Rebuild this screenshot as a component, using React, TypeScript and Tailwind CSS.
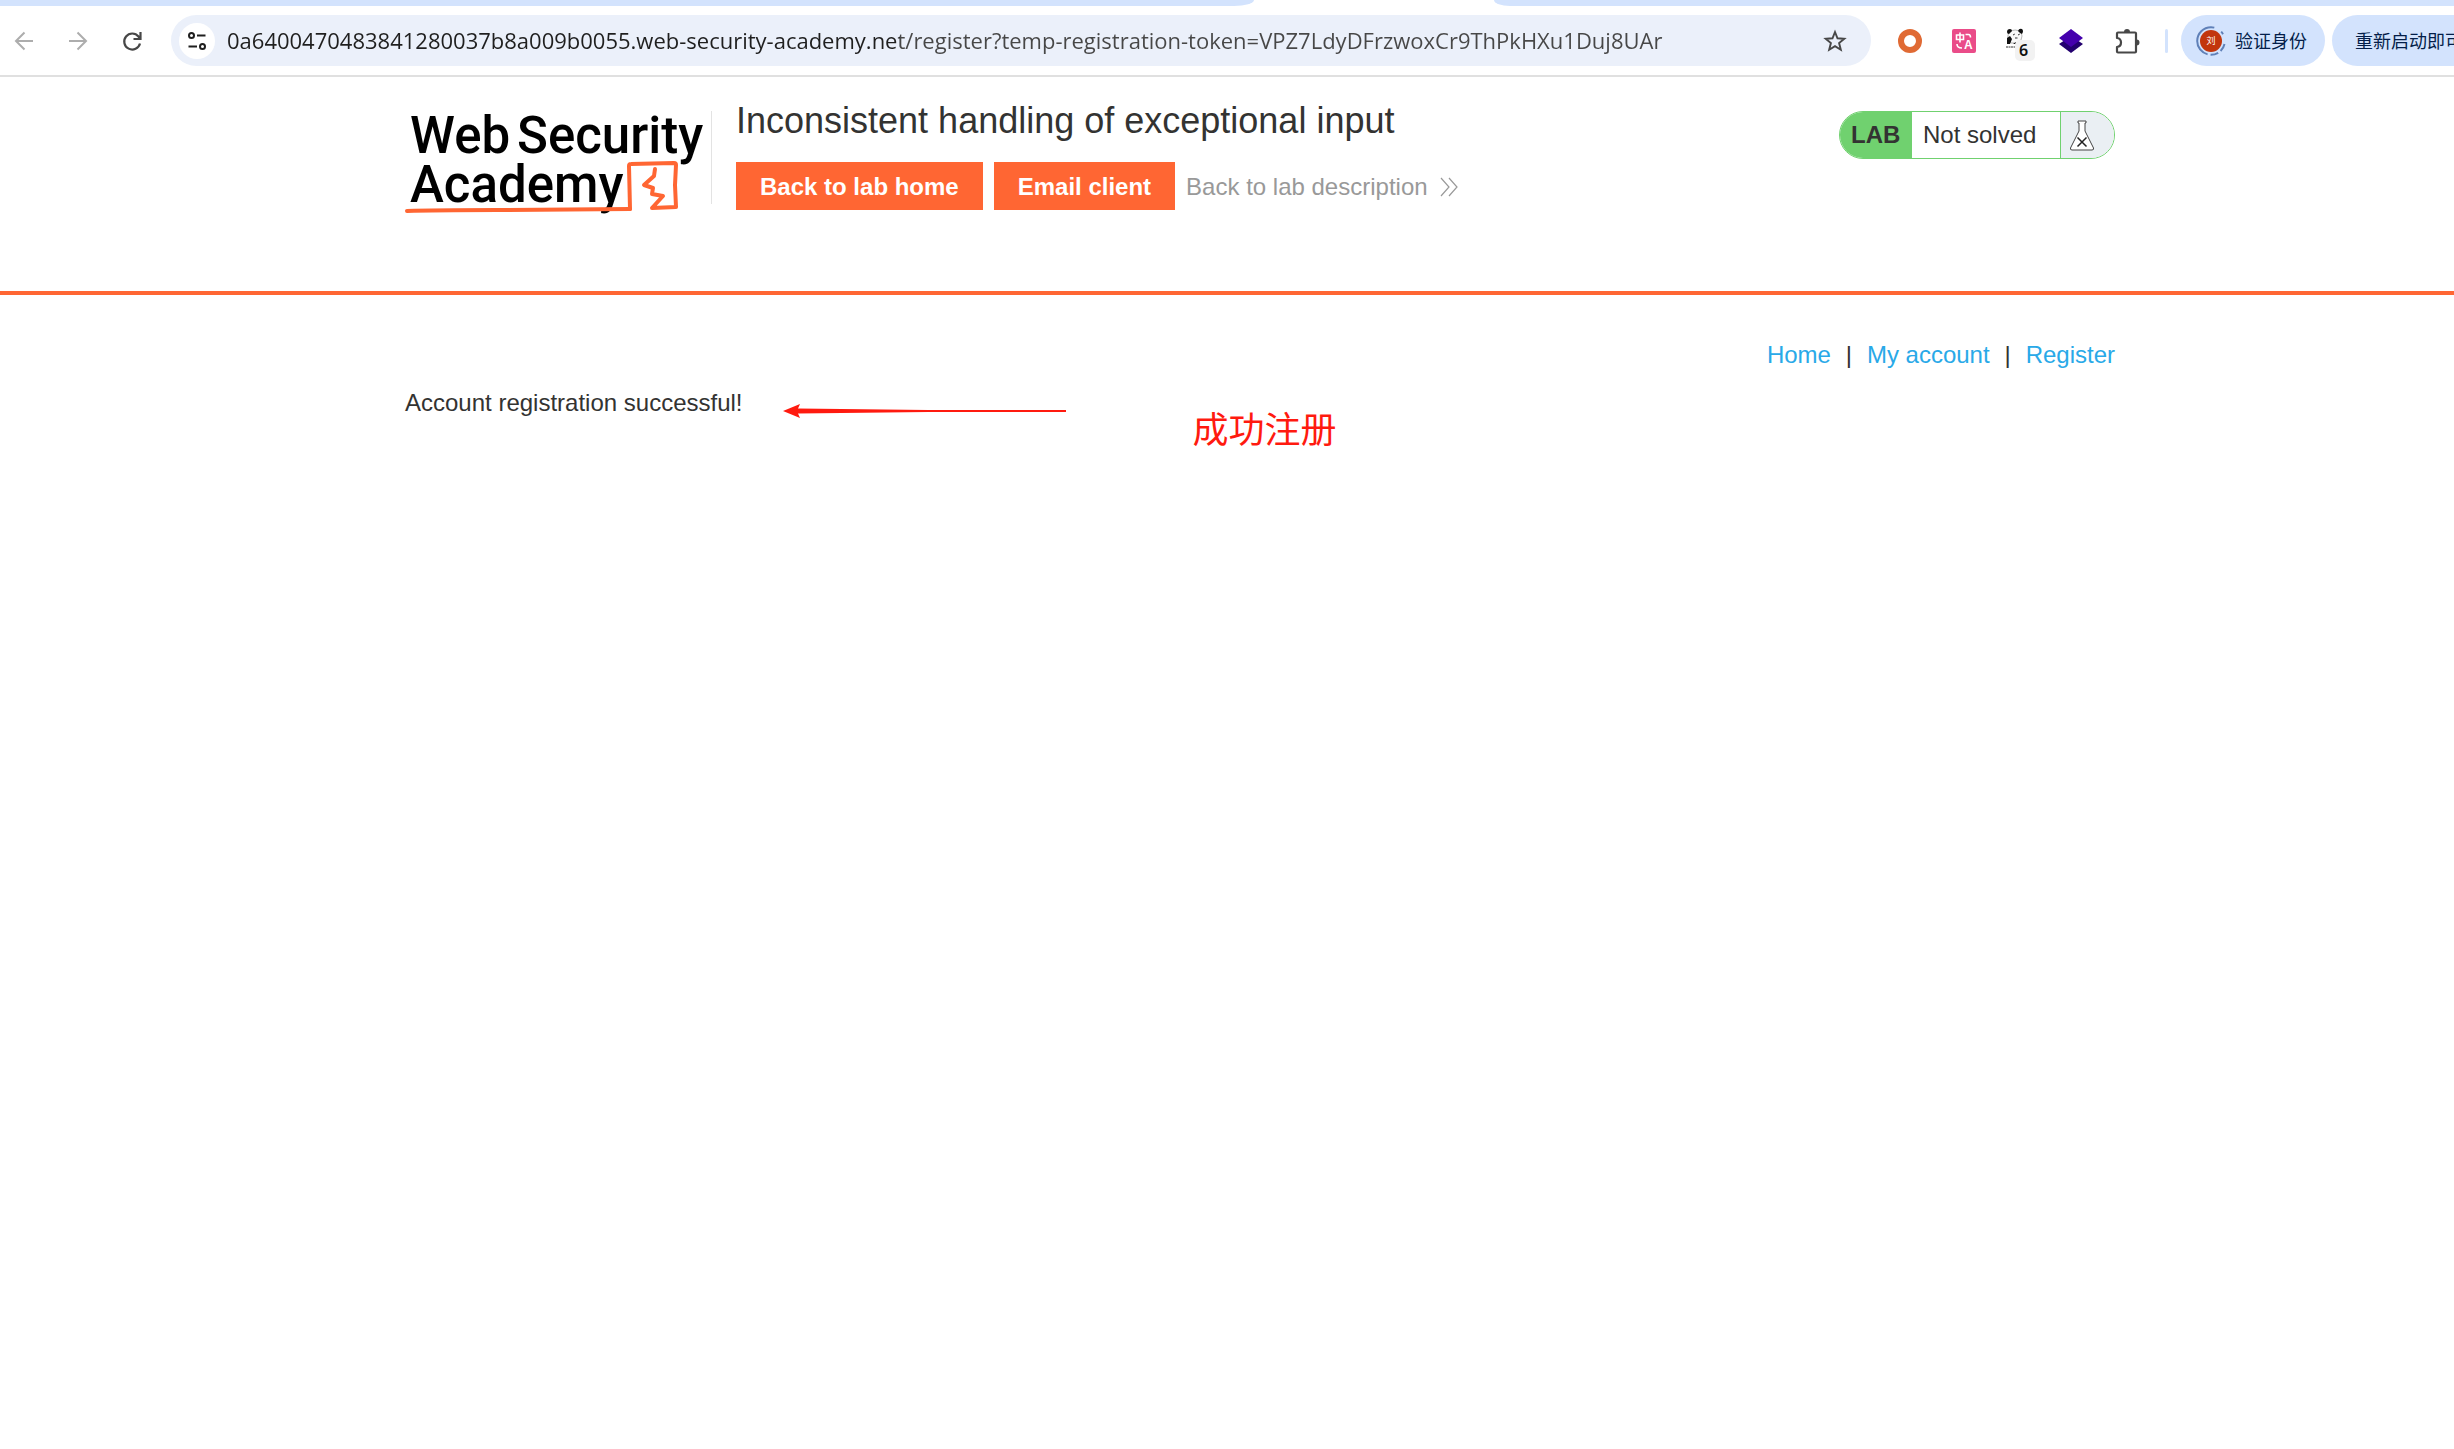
import React, { useState } from 'react';

const PAGE_URL =
  '0a6400470483841280037b8a009b0055.web-security-academy.net/register?temp-registration-token=VPZ7LdyDFrzwoxCr9ThPkHXu1Duj8UAr';

const navLinks = ['Home', 'My account', 'Register'];

function TabStrip() {
  return (
    <div className="grid grid-cols-[51.1%_240px_1fr] h-[6px] bg-white">
      <div className="bg-[#d3e3fd] rounded-br-[20px_6px]" />
      <div />
      <div className="bg-[#d3e3fd] rounded-bl-[16px_6px]" />
    </div>
  );
}

function TranslateIcon() {
  return (
    <svg className="w-6 h-6" viewBox="0 0 24 24" aria-hidden="true">
      <rect width="24" height="24" rx="2" fill="#ea4c89" />
      <g fill="none" stroke="#fff" strokeWidth="1.6">
        <path d="M4.5 6h7v4.500h-7zM8 3.500v10M13.500 5.500h3q2 0 2 3M5 15q0 4 5 4" />
      </g>
      <text x="12" y="20" fill="#fff" fontSize="12" fontWeight="700" fontFamily="Liberation Sans, sans-serif">A</text>
    </svg>
  );
}

function PandaIcon() {
  return (
    <svg className="w-[30px] h-[34px]" viewBox="0 0 30 34" aria-hidden="true">
      <path d="M3.500 4Q9 0 15 4L16 8 15 12 11 15H5L2 11V7z" fill="#fafafa" stroke="#999" strokeWidth=".7" />
      <path d="M1 4q0-3 3-3 2 0 2 2L3 6Q1 6 1 4zM12 3q1-3 4-2 2 2 0 5l-2-1zM1 10l3-2 2 3-2 5H1zM7 16l3-2 2 2z" fill="#111" />
      <path d="M7 7l2-1M12 7l2-1M9 10h3M0 19h9" stroke="#333" strokeWidth="1" strokeDasharray="2 .5" />
      <rect x="9" y="12" width="20" height="21" rx="5" fill="#f2f2f2" />
      <text x="13" y="28" fontSize="16" fontWeight="600" fill="#111" fontFamily="Noto Sans, sans-serif">6</text>
    </svg>
  );
}

function Toolbar() {
  const [url, setUrl] = useState(PAGE_URL);

  return (
    <header className="flex items-center h-[71px] border-b-2 border-[#e0e0e0] bg-white font-['Noto_Sans','Noto_Sans_CJK_SC',sans-serif]">
      <div className="flex items-center gap-[30px] pl-3 pr-[27px]">
        <button aria-label="Back" className="text-[#adadad]">
          <svg className="w-6 h-6" viewBox="0 0 24 24" fill="none" stroke="currentColor" strokeWidth="2">
            <path d="M21 12H4M12.500 3.500L4 12l8.500 8.500" />
          </svg>
        </button>
        <button aria-label="Forward" className="text-[#adadad]">
          <svg className="w-6 h-6" viewBox="0 0 24 24" fill="none" stroke="currentColor" strokeWidth="2">
            <path d="M3 12h17M11.500 3.500L20 12l-8.500 8.500" />
          </svg>
        </button>
        <button aria-label="Reload" className="text-[#474747]">
          <svg className="w-6 h-6" viewBox="0 0 24 24" fill="none" stroke="currentColor" strokeWidth="2.200">
            <path d="M20 14.500A8 8 0 1 1 18.500 7.500L20 9.500M20.500 3v7h-7" />
          </svg>
        </button>
      </div>

      <div className="flex flex-1 items-center h-[51px] pl-2 pr-6 rounded-full bg-[#ebf0fa]">
        <button aria-label="View site information" className="flex items-center justify-center w-9 h-9 rounded-full bg-white">
          <svg className="w-5 h-5" viewBox="0 0 20 20" fill="none" stroke="#1f1f1f" strokeWidth="2">
            <circle cx="4.500" cy="4.500" r="2.500" />
            <path d="M10 4.500h8.500M1.500 15.500H10" />
            <circle cx="15.500" cy="15.500" r="2.500" />
          </svg>
        </button>
        {/* host is darker than the path */}
        <input
          type="text"
          aria-label="Address"
          value={url}
          onChange={(e) => setUrl(e.target.value)}
          className="flex-1 min-w-0 ml-3 h-10 pb-[2px] text-[22px] font-['Open_Sans',sans-serif] outline-none text-transparent bg-clip-text bg-[linear-gradient(90deg,#1f1f1f_673px,#474747_673px)]"
        />
        <button aria-label="Bookmark this tab">
          <svg className="w-6 h-6" viewBox="0 0 24 24" fill="none" stroke="#474747" strokeWidth="1.900">
            <path d="M12 3l2.500 6.300 6.800.500-5.200 4.300 1.700 6.600L12 17.100l-5.800 3.600 1.700-6.600L2.700 9.800l6.800-.500z" />
          </svg>
        </button>
      </div>

      <div className="flex items-center gap-[30px] pl-[27px]">
        <button aria-label="Proxy extension">
          <svg className="w-6 h-6" viewBox="0 0 24 24">
            <circle cx="12" cy="12" r="9" fill="none" stroke="#e06a34" strokeWidth="6" />
          </svg>
        </button>
        <button aria-label="Translate"><TranslateIcon /></button>
        <button aria-label="Panda extension" className="-mr-[7px] pt-2"><PandaIcon /></button>
        <button aria-label="Layers extension">
          <svg className="w-6 h-6" viewBox="0 0 24 24">
            <path d="M12 7l12 8-12 9L0 15z" fill="#23006f" />
            <path d="M12 0l12 9-12 9L0 9z" fill="#4400ad" />
          </svg>
        </button>
        <button aria-label="Extensions">
          <svg className="w-7 h-7" viewBox="0 0 28 28">
            <path d="M4 6.500q0-1 1-1h17q1 0 1 1v18q0 1-1 1H5q-1 0-1-1V20q4-.500 4-4.500T4 11z" fill="none" stroke="#474747" strokeWidth="2.200" strokeLinejoin="round" />
            <path d="M11 5a3 3 0 0 1 6 0zM23.500 12.500a3 3 0 0 1 0 6z" fill="#474747" />
          </svg>
        </button>
      </div>

      <div className="w-[3px] h-6 ml-6 mr-[13px] rounded bg-[#d3e3fd]" />

      <button className="flex items-center h-[51px] w-36 pl-[15px] rounded-full bg-[#d3e3fd] text-lg text-[#041e49]">
        <svg className="w-[30px] h-[30px] mr-[9px]" viewBox="0 0 30 30" aria-hidden="true">
          <circle cx="15" cy="15" r="13.800" fill="none" stroke="#5f80b8" strokeWidth="2" strokeDasharray="8 3 8 3 8 3 8 3 43" strokeDashoffset="19" />
          <circle cx="15" cy="15" r="11" fill="#c2360d" />
          <text x="15" y="18" textAnchor="middle" fontSize="9" fill="#fff" fontFamily="Noto Sans CJK SC, sans-serif">刘</text>
        </svg>
        验证身份
      </button>
      <button className="h-[51px] w-[122px] ml-[7px] pl-[23px] rounded-l-full bg-[#d3e3fd] text-lg text-[#041e49] text-left whitespace-nowrap overflow-hidden">
        重新启动即可
      </button>
    </header>
  );
}

function AcademyLogo() {
  return (
    <svg className="block w-[306px] h-[112px]" viewBox="0 0 306 112" role="img" aria-label="Web Security Academy">
      <g fill="#000" fontFamily="Roboto, sans-serif" fontWeight="500" fontSize="51">
        <text x="5" y="47">Web</text>
        <text x="112" y="47">Security</text>
        <text x="5" y="96">Academy</text>
      </g>
      <g fill="none" stroke="#ff6633" strokeLinejoin="round" strokeLinecap="round">
        <path d="M225 103L224 60q0-2 2-2l43-1q2 0 2 2l-1 20 1 22-24 1 11-12-11-2 1-6-9-3 10-9 1-7" strokeWidth="4" />
        <path d="M2 105q25-1 90-1l133-1" strokeWidth="4" />
      </g>
    </svg>
  );
}

function LabStatus() {
  return (
    <div className="flex h-12 w-[276px] mt-[34px] rounded-[24px] border border-[#70d16f] overflow-hidden bg-white text-2xl">
      <span className="flex items-center w-[72px] pl-[11px] bg-[#70d16f] font-bold">LAB</span>
      <span className="flex flex-1 items-center pl-[11px]">Not solved</span>
      <span className="w-[54px] pl-2 pt-2 border-l border-[#70d16f] bg-[#eaeff3]">
        <svg className="w-[26px] h-8" viewBox="0 0 26 32" aria-hidden="true">
          <path d="M9 1h8v2h-1v8l8.500 17q.500 2-1.500 2H3q-2 0-1.500-2L10 11V3H9z" fill="#fff" stroke="#444" strokeWidth="1" />
          <path d="M8.500 17.500l9 9M17.500 17.500l-9 9" stroke="#222" strokeWidth="1.500" />
        </svg>
      </span>
    </div>
  );
}

function LabHeader() {
  return (
    <section className="flex items-start h-[218px] pl-[405px] pr-[339px] border-b-4 border-[#ff6633]">
      <div className="pt-[29px]"><AcademyLogo /></div>
      <div className="w-px h-[93px] mt-[34px] mr-6 bg-[#e3e3e3]" />
      <div className="flex-1 pt-6">
        <h1 className="text-4xl leading-10">Inconsistent handling of exceptional input</h1>
        <div className="flex items-center mt-[21px] text-2xl">
          <a href="#home" className="flex items-center h-12 px-6 pt-[2px] mr-[11px] bg-[#ff6633] font-bold text-white">Back to lab home</a>
          <a href="#email" className="flex items-center h-12 px-6 pt-[2px] mr-[11px] bg-[#ff6633] font-bold text-white">Email client</a>
          <a href="#description" className="flex items-center gap-[11px] pt-[2px] text-[#999]">
            Back to lab description
            <svg className="w-5 h-5" viewBox="0 0 20 20" fill="none" stroke="currentColor" strokeWidth="1.200" aria-hidden="true">
              <path d="M2 1l8 9-8 9M10 1l8 9-8 9" />
            </svg>
          </a>
        </div>
      </div>
      <LabStatus />
    </section>
  );
}

export default function App() {
  return (
    <div className="min-h-screen overflow-x-hidden bg-white text-[#333332] font-['Liberation_Sans',Arial,sans-serif]">
      <TabStrip />
      <Toolbar />
      <LabHeader />
      <main className="pl-[405px] pr-[339px] pt-[42px] text-2xl">
        <nav className="flex justify-end h-9 items-center">
          {navLinks.map((label, i) => (
            <React.Fragment key={label}>
              {i > 0 && <span className="w-9 text-center">|</span>}
              <a href="#" className="text-[#29a9e8]">{label}</a>
            </React.Fragment>
          ))}
        </nav>
        <div className="flex items-start pt-3">
          <p className="leading-9">Account registration successful!</p>
          <svg className="w-[284px] h-4 ml-10 mt-[18px]" viewBox="0 0 284 16" aria-hidden="true">
            <path d="M0 8L17 1l-2 4.500 130 1.500 138 0v2H145L15 10.500l2 4.500z" fill="#ff1a0f" />
          </svg>
          <span className="ml-[126px] mt-[17px] text-4xl leading-[50px] text-[#ff1a0f] font-['Noto_Sans_CJK_SC',sans-serif]">成功注册</span>
        </div>
      </main>
    </div>
  );
}
